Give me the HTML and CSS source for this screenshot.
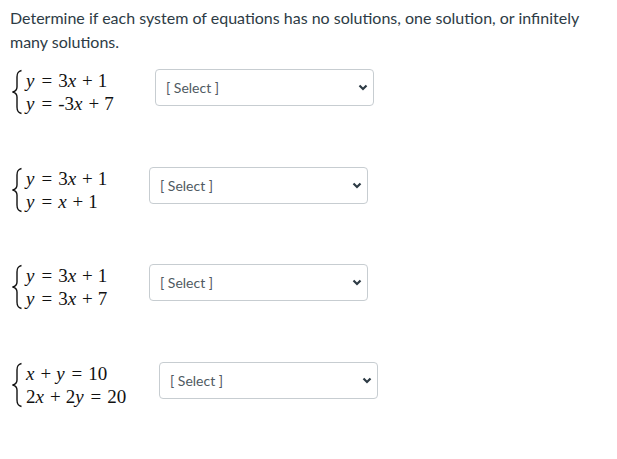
FILE: index.html
```html
<!DOCTYPE html>
<html>
<head>
<meta charset="utf-8">
<link rel="stylesheet" href="styles.css">
</head>
<body>
<p class="prompt">Determine if each system of equations has no solutions, one solution, or infinitely many solutions.</p>

<div class="rows">
<div class="row row1">
  <div class="system">
    <svg class="brace" width="12" height="46" viewBox="0 0 12 46"><path d="M10.5 1.5 C7 2.5 6 4 6 8 L6 18 C6 21 4.5 22.3 1.5 23 C4.5 23.7 6 25 6 28 L6 38 C6 42 7 43.5 10.5 44.5" fill="none" stroke="#111" stroke-width="1.4"/></svg>
    <div class="eqs">
      <div class="eq"><i>y</i><span class="eqop">=</span>3<i>x</i><span class="op">+</span>1</div>
      <div class="eq"><i>y</i><span class="eqop">=</span>-3<i>x</i><span class="op">+</span>7</div>
    </div>
  </div>
  <div class="dropdown"><span>[ Select ]</span><svg class="chev" width="10" height="7" viewBox="0 0 10 7"><path d="M1.5 1.5 L5 5 L8.5 1.5" fill="none" stroke="#2d3b45" stroke-width="2.2"/></svg></div>
</div>

<div class="row row2">
  <div class="system">
    <svg class="brace" width="12" height="46" viewBox="0 0 12 46"><path d="M10.5 1.5 C7 2.5 6 4 6 8 L6 18 C6 21 4.5 22.3 1.5 23 C4.5 23.7 6 25 6 28 L6 38 C6 42 7 43.5 10.5 44.5" fill="none" stroke="#111" stroke-width="1.4"/></svg>
    <div class="eqs">
      <div class="eq"><i>y</i><span class="eqop">=</span>3<i>x</i><span class="op">+</span>1</div>
      <div class="eq"><i>y</i><span class="eqop">=</span><i>x</i><span class="op">+</span>1</div>
    </div>
  </div>
  <div class="dropdown"><span>[ Select ]</span><svg class="chev" width="10" height="7" viewBox="0 0 10 7"><path d="M1.5 1.5 L5 5 L8.5 1.5" fill="none" stroke="#2d3b45" stroke-width="2.2"/></svg></div>
</div>

<div class="row row3">
  <div class="system">
    <svg class="brace" width="12" height="46" viewBox="0 0 12 46"><path d="M10.5 1.5 C7 2.5 6 4 6 8 L6 18 C6 21 4.5 22.3 1.5 23 C4.5 23.7 6 25 6 28 L6 38 C6 42 7 43.5 10.5 44.5" fill="none" stroke="#111" stroke-width="1.4"/></svg>
    <div class="eqs">
      <div class="eq"><i>y</i><span class="eqop">=</span>3<i>x</i><span class="op">+</span>1</div>
      <div class="eq"><i>y</i><span class="eqop">=</span>3<i>x</i><span class="op">+</span>7</div>
    </div>
  </div>
  <div class="dropdown"><span>[ Select ]</span><svg class="chev" width="10" height="7" viewBox="0 0 10 7"><path d="M1.5 1.5 L5 5 L8.5 1.5" fill="none" stroke="#2d3b45" stroke-width="2.2"/></svg></div>
</div>

<div class="row row4">
  <div class="system">
    <svg class="brace" width="12" height="46" viewBox="0 0 12 46"><path d="M10.5 1.5 C7 2.5 6 4 6 8 L6 18 C6 21 4.5 22.3 1.5 23 C4.5 23.7 6 25 6 28 L6 38 C6 42 7 43.5 10.5 44.5" fill="none" stroke="#111" stroke-width="1.4"/></svg>
    <div class="eqs">
      <div class="eq"><i>x</i><span class="op">+</span><i>y</i><span class="eqop">=</span>10</div>
      <div class="eq">2<i>x</i><span class="op">+</span>2<i>y</i><span class="eqop">=</span>20</div>
    </div>
  </div>
  <div class="dropdown"><span>[ Select ]</span><svg class="chev" width="10" height="7" viewBox="0 0 10 7"><path d="M1.5 1.5 L5 5 L8.5 1.5" fill="none" stroke="#2d3b45" stroke-width="2.2"/></svg></div>
</div>
</div>
</body>
</html>
```
FILE: styles.css
```css
html, body {
  margin: 0;
  padding: 0;
  background: #fff;
}
body {
  font-family: Lato, "Noto Sans", sans-serif;
  color: #2d3b45;
  padding: 6px 10px 40px 10px;
}
.prompt {
  margin: 0;
  font-size: 16px;
  line-height: 24px;
  width: 590px;
}
.rows {
  display: flex;
  flex-direction: column;
  gap: 60px;
  margin-top: 15px;
}
.row {
  display: flex;
  align-items: center;
  height: 37px;
}
.row2 { margin-top: 1px; }
.row4 { margin-top: 1px; }
.system {
  display: flex;
  align-items: center;
  flex: none;
  padding-left: 1px;
  padding-top: 8px;
  box-sizing: border-box;
}
.row1 .system { width: 145px; }
.row2 .system { width: 139px; }
.row3 .system { width: 139px; }
.row4 .system { width: 149px; }
.brace {
  display: block;
  margin-right: 3px;
}
.eqs {
  font-family: "Liberation Serif", "DejaVu Serif", serif;
  font-size: 19px;
  line-height: 23px;
  color: #111;
}
.eq i {
  font-style: italic;
  padding-right: 1px;
}
.eqop {
  padding: 0 6px;
}
.op {
  padding: 0 5px;
}
.dropdown {
  position: relative;
  box-sizing: border-box;
  width: 219px;
  height: 37px;
  border: 1px solid #c7cdd1;
  border-radius: 4px;
  display: flex;
  align-items: center;
  padding-left: 10px;
  font-size: 14px;
  color: #505a62;
}
.chev {
  position: absolute;
  right: 5px;
  top: 14px;
}
```
